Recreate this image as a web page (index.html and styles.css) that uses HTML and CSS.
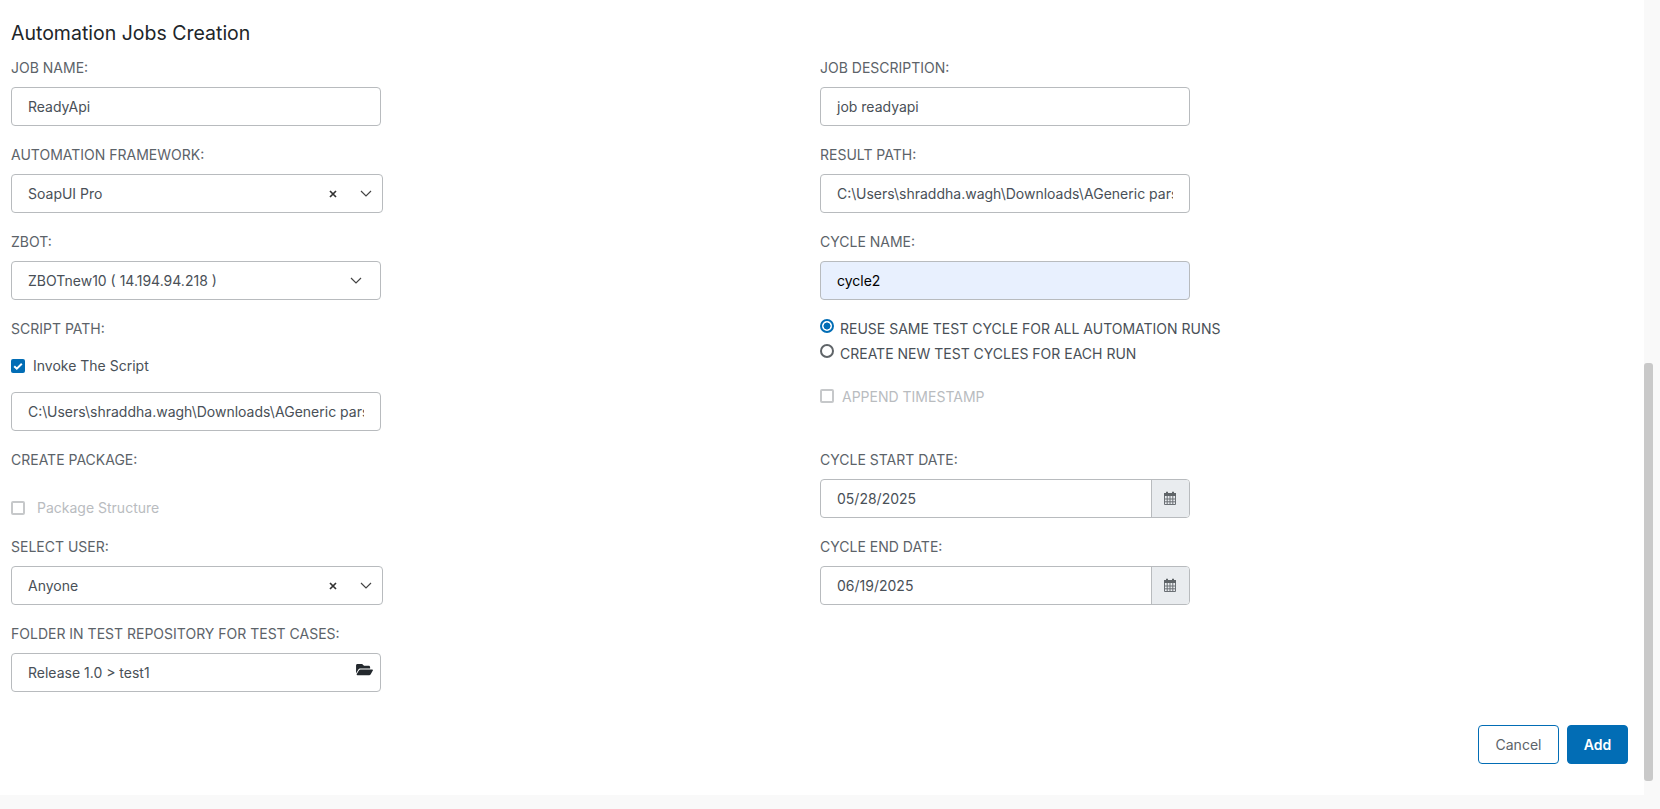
FILE: index.html
```html
<!DOCTYPE html>
<html lang="en">
<head>
<meta charset="utf-8">
<title>Automation Jobs Creation</title>
<link rel="stylesheet" href="styles.css">
</head>
<body>
<main class="card">
  <h1 class="title">Automation Jobs Creation</h1>
  <div class="columns">
    <div class="col">
      <div class="field"><div class="label">JOB NAME:</div><div class="control">ReadyApi</div></div>
      <div class="field"><div class="label">AUTOMATION FRAMEWORK:</div>
        <div class="control select"><span class="value">SoapUI Pro</span>
          <svg class="clear" viewBox="0 0 8 8"><path d="M1 1l6 6M7 1L1 7"/></svg>
          <svg class="chev" viewBox="0 0 12 7"><path d="M1 1l5 5 5-5"/></svg></div></div>
      <div class="field"><div class="label">ZBOT:</div>
        <div class="control select solo"><span class="value">ZBOTnew10 ( 14.194.94.218 )</span>
          <svg class="chev" viewBox="0 0 12 7"><path d="M1 1l5 5 5-5"/></svg></div></div>
      <div class="field"><div class="label">SCRIPT PATH:</div>
        <div class="check-row script-check"><span class="box on"><svg viewBox="0 0 14 14"><path d="M3.2 7.2l2.6 2.5 5-5"/></svg></span><span>Invoke The Script</span></div>
        <div class="control"><div class="clip">C:\Users\shraddha.wagh\Downloads\AGeneric pars</div></div></div>
      <div class="field"><div class="label">CREATE PACKAGE:</div>
        <div class="check-row package-check disabled"><span class="box"></span><span class="wide-gap">Package Structure</span></div></div>
      <div class="field"><div class="label">SELECT USER:</div>
        <div class="control select"><span class="value">Anyone</span>
          <svg class="clear" viewBox="0 0 8 8"><path d="M1 1l6 6M7 1L1 7"/></svg>
          <svg class="chev" viewBox="0 0 12 7"><path d="M1 1l5 5 5-5"/></svg></div></div>
      <div class="field"><div class="label">FOLDER IN TEST REPOSITORY FOR TEST CASES:</div>
        <div class="control folder"><span class="value">Release 1.0 &gt; test1</span>
          <svg class="folder-icon" viewBox="0 0 576 512"><path d="M572.694 292.093L500.27 416.248A63.997 63.997 0 0 1 444.989 448H45.025c-18.523 0-30.064-20.093-20.731-36.093l72.424-124.155A64 64 0 0 1 152 256h399.964c18.523 0 30.064 20.093 20.73 36.093zM152 224h328v-48c0-26.51-21.49-48-48-48H272l-64-64H48C21.49 64 0 85.49 0 112v278.046l69.077-118.418C86.214 242.25 117.989 224 152 224z"/></svg></div></div>
    </div>
    <div class="col">
      <div class="field"><div class="label">JOB DESCRIPTION:</div><div class="control">job readyapi</div></div>
      <div class="field"><div class="label">RESULT PATH:</div><div class="control"><div class="clip">C:\Users\shraddha.wagh\Downloads\AGeneric pars</div></div></div>
      <div class="field cycle"><div class="label">CYCLE NAME:</div><div class="control autofill">cycle2</div></div>
      <div class="radio-row"><span class="radio on"></span><span>REUSE SAME TEST CYCLE FOR ALL AUTOMATION RUNS</span></div>
      <div class="radio-row"><span class="radio"></span><span>CREATE NEW TEST CYCLES FOR EACH RUN</span></div>
      <div class="check-row append-check disabled"><span class="box"></span><span>APPEND TIMESTAMP</span></div>
      <div class="field"><div class="label">CYCLE START DATE:</div>
        <div class="date"><div class="date-value">05/28/2025</div><div class="addon"><svg class="cal" viewBox="0 0 14 14"><path class="cal-top" d="M1 2h2V.8h2V2h4V.8h2V2h2v3H1z"/><path class="cal-grid" d="M1.5 5v8.5h11V5M1.5 8h11M1.5 10.8h11M4.2 5v8.5M7 5v8.5M9.8 5v8.5"/></svg></div></div></div>
      <div class="field"><div class="label">CYCLE END DATE:</div>
        <div class="date"><div class="date-value">06/19/2025</div><div class="addon"><svg class="cal" viewBox="0 0 14 14"><path class="cal-top" d="M1 2h2V.8h2V2h4V.8h2V2h2v3H1z"/><path class="cal-grid" d="M1.5 5v8.5h11V5M1.5 8h11M1.5 10.8h11M4.2 5v8.5M7 5v8.5M9.8 5v8.5"/></svg></div></div></div>
    </div>
  </div>
  <div class="actions">
    <button class="btn ghost" type="button">Cancel</button>
    <button class="btn primary" type="button">Add</button>
  </div>
</main>
<div class="scroll-thumb"></div>
</body>
</html>
```

FILE: styles.css
```css
* { box-sizing: border-box; }
html, body { margin: 0; height: 100%; }
body {
  background: #f9f9f9;
  font-family: Inter, "Liberation Sans", sans-serif;
  font-size: 14px;
  line-height: 21px;
  color: #495057;
  overflow: hidden;
  position: relative;
}
.card { width: 1644px; height: 795px; background: #fff; padding: 20px 16px 0 11px; }
.title { margin: 0 0 10px; font-size: 19.5px; line-height: 27px; font-weight: 400; color: #212529; }
.columns { display: grid; grid-template-columns: 809px 1fr; }
.col { display: flex; flex-direction: column; }
.field { margin-bottom: 18px; }
.label { margin-bottom: 9px; color: #5c6369; }
.control {
  height: 39px; width: 370px; padding: 0 16px;
  border: 1px solid #b8bbbe; border-radius: 4px; background: #fff;
  line-height: 37px; white-space: nowrap; overflow: hidden;
}
.clip { overflow: hidden; }
.select, .folder { display: flex; align-items: center; }
.select { width: 372px; padding-right: 10px; }
.select.solo { width: 370px; padding-right: 18px; }
.value { flex: 1; min-width: 0; }
.clear { width: 8px; height: 8px; margin-right: 23px; fill: none; stroke: #333; stroke-width: 1.7; }
.chev { width: 12px; height: 7px; fill: none; stroke: #444; stroke-width: 1.2; }
.folder { padding-right: 7px; }
.folder-icon { width: 17px; height: 15px; fill: #23282d; margin-top: -6px; }
.autofill { background: #e8f0fe; color: #000; }
.check-row { display: flex; align-items: center; }
.script-check { margin: 16px 0 16px; }
.package-check { margin-top: 27px; }
.append-check { margin-top: 18px; margin-bottom: 42px; }
.disabled { color: #b9bcbf; }
.box {
  width: 14px; height: 14px; flex: none; margin-right: 8px;
  border: 2px solid #c6c8ca; border-radius: 2px; background: #fff;
}
.box.on { border: 0; background: #026db5; }
.box svg { display: block; fill: none; stroke: #fff; stroke-width: 2; }
.wide-gap { margin-left: 4px; }
.radio-row { display: flex; align-items: flex-start; height: 25px; white-space: nowrap; }
.cycle { margin-bottom: 17.5px; }
.radio {
  width: 14px; height: 14px; flex: none; margin-right: 6px; margin-top: 1px;
  border: 2px solid #5f6468; border-radius: 50%; background: #fff;
}
.radio.on { border-color: #026db5; background: radial-gradient(circle, #026db5 0 3.2px, #fff 3.8px); }
.date { display: flex; width: 370px; height: 39px; border: 1px solid #b8bbbe; border-radius: 4px; overflow: hidden; }
.date-value { flex: 1; padding: 0 16px; line-height: 37px; }
.addon { width: 38px; padding-right: 2px; display: flex; align-items: center; justify-content: center; background: #e9ecef; border-left: 1px solid #b8bbbe; }
.cal { width: 14px; height: 14px; }
.cal-top { fill: #5f6468; }
.cal-grid { fill: none; stroke: #6b7075; stroke-width: 1; }
.actions { display: flex; justify-content: flex-end; gap: 8px; margin-top: 15px; }
.btn { height: 39px; border-radius: 4px; font: 14px/21px Inter, "Liberation Sans", sans-serif; padding: 0; }
.ghost { width: 81px; background: #fff; border: 1px solid #026db5; color: #5c6369; }
.primary { width: 61px; background: #026db5; border: 1px solid #026db5; color: #fff; font-weight: 600; }
.scroll-thumb { position: absolute; left: 1644px; top: 363px; width: 9px; height: 418px; background: #c9c9c9; border-radius: 3px; }
```
